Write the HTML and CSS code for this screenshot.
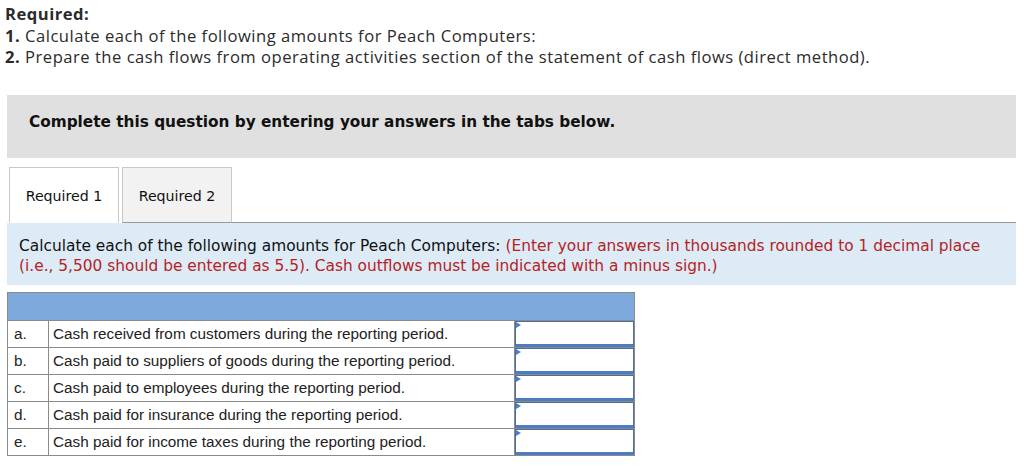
FILE: index.html
```html
<!DOCTYPE html>
<html>
<head>
<meta charset="utf-8">
<link rel="stylesheet" href="styles.css">
</head>
<body>
<div class="intro">
  <div class="intro-title">Required:</div>
  <div class="intro-line"><b>1.</b> Calculate each of the following amounts for Peach Computers:</div>
  <div class="intro-line"><b>2.</b> Prepare the cash flows from operating activities section of the statement of cash flows (direct method).</div>
</div>
<div class="notice">Complete this question by entering your answers in the tabs below.</div>
<div class="tabs">
  <div class="tab active">Required 1</div>
  <div class="tab">Required 2</div>
  <div class="tab-rest"></div>
</div>
<div class="panel">Calculate each of the following amounts for Peach Computers: <span class="hint">(Enter your answers in thousands rounded to 1 decimal place (i.e., 5,500 should be entered as 5.5). Cash outflows must be indicated with a minus sign.)</span></div>
<table class="grid">
  <tr class="head"><td colspan="3"></td></tr>
  <tr><td class="lbl">a.</td><td class="desc">Cash received from customers during the reporting period.</td><td class="ans"><div class="box"></div></td></tr>
  <tr><td class="lbl">b.</td><td class="desc">Cash paid to suppliers of goods during the reporting period.</td><td class="ans"><div class="box"></div></td></tr>
  <tr><td class="lbl">c.</td><td class="desc">Cash paid to employees during the reporting period.</td><td class="ans"><div class="box"></div></td></tr>
  <tr><td class="lbl">d.</td><td class="desc">Cash paid for insurance during the reporting period.</td><td class="ans"><div class="box"></div></td></tr>
  <tr><td class="lbl">e.</td><td class="desc">Cash paid for income taxes during the reporting period.</td><td class="ans"><div class="box"></div></td></tr>
</table>
</body>
</html>
```
FILE: styles.css
```css
body {
  margin: 0;
  background: #fff;
  color: #222;
}
.intro {
  padding: 3px 0 0 5px;
  font-family: "Open Sans", "Lato", sans-serif;
  font-size: 16.6px;
  letter-spacing: 0.5px;
  line-height: 21.5px;
  color: #2b2b2b;
}
.intro-title {
  font-weight: bold;
}
.intro-line b {
  font-weight: bold;
}
.notice {
  margin: 27px 8px 0 7px;
  height: 63px;
  box-sizing: border-box;
  background: #e0e0e0;
  padding: 17px 0 0 22px;
  font-family: "DejaVu Sans", Verdana, sans-serif;
  font-weight: bold;
  font-size: 15.3px;
  line-height: 20px;
  color: #111;
}
.tabs {
  display: flex;
  margin: 9px 8px 0 7px;
  height: 56px;
  font-family: "DejaVu Sans", Verdana, sans-serif;
  font-size: 14.2px;
  color: #111;
}
.tab {
  width: 110px;
  box-sizing: border-box;
  padding-top: 3px;
  border: 1px solid #c8c8c8;
  margin-left: 3px;
  background: #f2f2f2;
  display: flex;
  align-items: center;
  justify-content: center;
  border-bottom: 1px solid #999;
}
.tab:first-child {
  margin-left: 2px;
}
.tab.active {
  background: #fff;
  border-bottom: 1px solid #fff;
}
.tab-rest {
  flex: 1;
  border-bottom: 1px solid #999;
}
.panel {
  margin: 0 8px 0 7px;
  background: #ddebf7;
  padding: 13px 12px 9px 12px;
  font-family: "DejaVu Sans", Verdana, sans-serif;
  font-size: 15.4px;
  line-height: 20px;
  color: #111;
}
.hint {
  color: #b5231f;
}
.grid {
  margin: 7px 0 0 7px;
  border-collapse: collapse;
  font-family: "Liberation Sans", Arial, sans-serif;
  font-size: 15.3px;
  color: #222;
}
.grid td {
  border: 1px solid #8a8a8a;
  height: 26px;
  padding: 0;
}
.grid tr.head td {
  background: #7ea9dc;
  height: 27px;
}
.lbl {
  width: 34px;
  padding-left: 6px !important;
}
.desc {
  width: 461px;
  padding-left: 4px !important;
}
.ans {
  width: 119px;
  position: relative;
}
.box {
  position: relative;
  height: 22px;
  border: 1px solid #4a6e9e;
  border-bottom: 3px solid #4d7cc0;
  background: #fff;
}
.box::before {
  content: "";
  position: absolute;
  left: 0;
  top: 0;
  border-left: 5px solid #4a7fd0;
  border-top: 3px solid transparent;
  border-bottom: 3px solid transparent;
}
```
